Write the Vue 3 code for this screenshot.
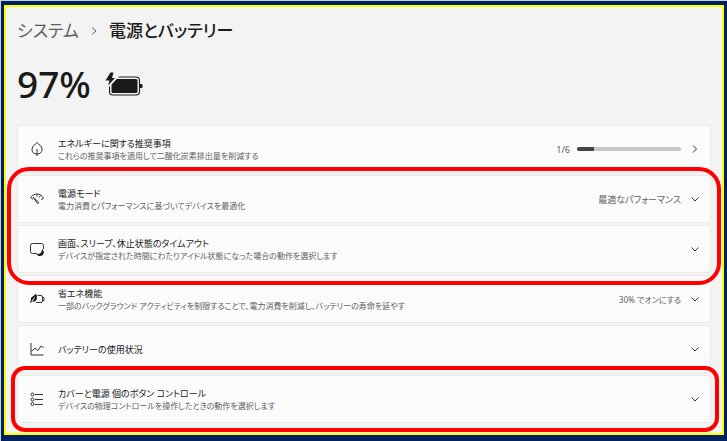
<script setup>
import { ref } from 'vue'

const battery = ref(97)
const done = ref(1)
const total = ref(6)

// framed groups get the red marker around them
const groups = [
  {
    id: 'energy',
    items: [
      {
        icon: 'leaf',
        title: 'エネルギーに関する推奨事項',
        desc: 'これらの推奨事項を適用して二酸化炭素排出量を削減する',
        progress: true,
      },
    ],
  },
  {
    id: 'mode',
    frame: 'frame-large',
    items: [
      {
        icon: 'gauge',
        title: '電源モード',
        desc: '電力消費とパフォーマンスに基づいてデバイスを最適化',
        value: '最適なパフォーマンス',
      },
      {
        icon: 'screen',
        title: '画面、スリープ、休止状態のタイムアウト',
        desc: 'デバイスが指定された時間にわたりアイドル状態になった場合の動作を選択します',
      },
    ],
  },
  {
    id: 'saver',
    items: [
      {
        icon: 'saver',
        title: '省エネ機能',
        desc: '一部のバックグラウンド アクティビティを制限することで、電力消費を削減し、バッテリーの寿命を延やす',
        value: '30% でオンにする',
        small: true,
      },
      { icon: 'chart', title: 'バッテリーの使用状況' },
    ],
  },
  {
    id: 'buttons',
    frame: 'frame-small',
    items: [
      {
        icon: 'list',
        title: 'カバーと電源 個のボタン コントロール',
        desc: 'デバイスの物理コントロールを操作したときの動作を選択します',
      },
    ],
  },
]
</script>

<template>
  <div class="desktop">
    <main class="window">
      <nav class="breadcrumb">
        <a href="#" class="parent">システム</a>
        <svg class="sep" width="6" height="10" viewBox="0 0 6 10"><path d="M1 1.500l4 3.500-4 3.500" /></svg>
        <h1>電源とバッテリー</h1>
      </nav>

      <div class="battery">
        <span class="percent">{{ battery }}%</span>
        <svg width="38" height="26" viewBox="0 0 38 26">
          <rect x="4.5" y="6" width="30" height="18" rx="3.5" fill="none" stroke="#1a1a1a" stroke-width="1.1" />
          <rect x="6.500" y="8" width="26" height="14" rx="1.500" fill="#1a1a1a" />
          <path d="M35 13h1.5q1 0 1 1v2q0 1-1 1H35z" fill="#1a1a1a" />
          <path d="M5.500 1.500L0.500 9.500h4L3 14.500L10 7H7L8.500 1.500z" fill="#1a1a1a" stroke="#f3f3f3" stroke-width="4" />
          <path d="M5.500 1.500L0.500 9.500h4L3 14.500L10 7H7L8.500 1.500z" fill="#1a1a1a" />
        </svg>
      </div>

      <div class="settings">
        <section v-for="g in groups" :key="g.id" class="group" :class="g.frame">
          <button v-for="item in g.items" :key="item.icon" type="button" class="card">
            <svg class="icon" width="16" height="16" viewBox="0 0 16 16">
              <g v-if="item.icon === 'leaf'">
                <path d="M8 1.500C6.500 3.500 3 4.500 3 8.500c0 3 2 4.500 5 4.500s5-1.500 5-4.500c0-4-3.500-5-5-7zM8 8v7" />
              </g>
              <g v-else-if="item.icon === 'gauge'">
                <path d="M1.500 6.500C4 3.500 6 3 8 3c3 0 5 1.500 6.500 4.500l-2.500 1M1.500 6.500l2.500 2M8 3v2.500M11.500 4.500L10 6.500" />
                <path d="M4 6l5.500 5q.5 1.500-1 1.500z" />
              </g>
              <g v-else-if="item.icon === 'screen'">
                <path d="M8 12.500H3.500q-2 0-2-2v-6q0-2 2-2h9q2 0 2 2V8" />
                <path class="solid" d="M13 8c3.500 3 1.500 7-2 7-1.500 0-2.500-.5-3.500-2 3.500.5 5.500-1.500 5.500-5z" />
              </g>
              <g v-else-if="item.icon === 'saver'">
                <path d="M8.500 4.500H12q1.500 0 1.500 1.500v4q0 1.500-1.500 1.500H7M14 6.500h1v3h-1" />
                <path class="solid" d="M7 2.500c1.500 3 1.500 7-1.500 8-1 .5-2 0-2.500 0L1.500 12 1 11l1-1.500C1 5.500 5 5.500 7 2.500z" />
                <path class="vein" d="M3 10.500L5.500 6.500" />
              </g>
              <g v-else-if="item.icon === 'chart'">
                <path d="M2 2v12h12.500M2.500 10.500L6 7l3 2.500L12 5l2.500 1.500" />
              </g>
              <g v-else>
                <path d="M6 3.500H14M6 8.500H14M6 13.500H14" />
                <circle cx="3.500" cy="3.500" r="1.500" />
                <circle cx="3.500" cy="8.500" r="1.500" />
                <circle cx="3.500" cy="13" r="1.500" />
              </g>
            </svg>

            <span class="text">
              <span class="title">{{ item.title }}</span>
              <span v-if="item.desc" class="desc">{{ item.desc }}</span>
            </span>

            <span v-if="item.progress" class="progress">
              <span class="count">{{ done }}/{{ total }}</span>
              <span class="track">
                <span class="fill" :style="{ width: (done / total) * 100 + '%' }"></span>
              </span>
            </span>
            <span v-if="item.value" class="value" :class="{ small: item.small }">{{ item.value }}</span>

            <svg class="arrow" width="10" height="10" viewBox="0 0 10 10">
              <path v-if="item.progress" d="M3 1.500L6.500 5 3 8.500" />
              <path v-else d="M1.500 3.500L5 7l3.500-3.500" />
            </svg>
          </button>
        </section>
      </div>
    </main>
  </div>
</template>

<style>
body {
  background: #002060;
}
</style>

<style scoped>
.desktop {
  box-sizing: border-box;
  min-height: 100vh;
  display: flex;
  padding: 4px 3px 6px;
  border-top: 1px solid #c9d3d6;
  border-left: 1px solid #c9d3d6;
  background: #002060;
  font-family: "Noto Sans", "Noto Sans CJK JP", sans-serif;
  font-feature-settings: "palt";
  color: #1a1a1a;
}

.window {
  flex: 1;
  min-width: 0;
  padding: 10px 11px;
  border: 2px solid #ff0;
  background: #f3f3f3;
}

.breadcrumb {
  display: flex;
  align-items: center;
  gap: 12px;
  height: 28px;
  font-size: 17px;
  line-height: 28px;
}

.parent {
  color: #606060;
  text-decoration: none;
}

.sep {
  fill: none;
  stroke: #606060;
}

h1 {
  margin: 0;
  font-size: 17px;
  font-weight: 500;
}

.battery {
  display: flex;
  align-items: center;
  gap: 14px;
  height: 48px;
  margin: 15px 0 17px;
}

.percent {
  font-size: 37px;
  font-weight: 500;
  line-height: 48px;
}

.settings,
.group {
  display: flex;
  flex-direction: column;
  gap: 2px;
}

.group {
  position: relative;
}

.frame-large::after,
.frame-small::after {
  content: "";
  position: absolute;
  z-index: 1;
  border: 4px solid #f00;
  pointer-events: none;
}

.frame-large::after {
  inset: -8px -10px -12px;
  border-radius: 22px;
}

.frame-small::after {
  inset: -9px -8px -9px -6px;
  border-radius: 14px;
}

.card {
  box-sizing: border-box;
  display: flex;
  align-items: center;
  gap: 13px;
  width: 100%;
  height: 48px;
  padding: 0 10px 0 11px;
  border: 1px solid #e9e9e9;
  border-radius: 3px;
  background: #fbfbfb;
  color: inherit;
  font: inherit;
  font-feature-settings: inherit;
  text-align: left;
}

.icon,
.arrow {
  flex-shrink: 0;
  fill: none;
  stroke: #333;
}

.icon .solid {
  fill: #1a1a1a;
  stroke: none;
}

.icon .vein {
  stroke: #fbfbfb;
}

.text {
  flex: 1;
  min-width: 0;
  display: flex;
  flex-direction: column;
}

.title {
  font-size: 9px;
  line-height: 13px;
}

.desc {
  font-size: 8px;
  line-height: 12px;
  color: #606060;
}

.progress {
  display: flex;
  align-items: center;
  gap: 7px;
}

.count,
.value {
  font-size: 9px;
  color: #606060;
}

.value.small {
  font-size: 8px;
}

.track {
  width: 104px;
  height: 4px;
  border-radius: 2px;
  background: #c6c6c6;
  overflow: hidden;
}

.fill {
  display: block;
  height: 100%;
  background: #444;
}

.arrow {
  margin-left: -4px;
}
</style>
